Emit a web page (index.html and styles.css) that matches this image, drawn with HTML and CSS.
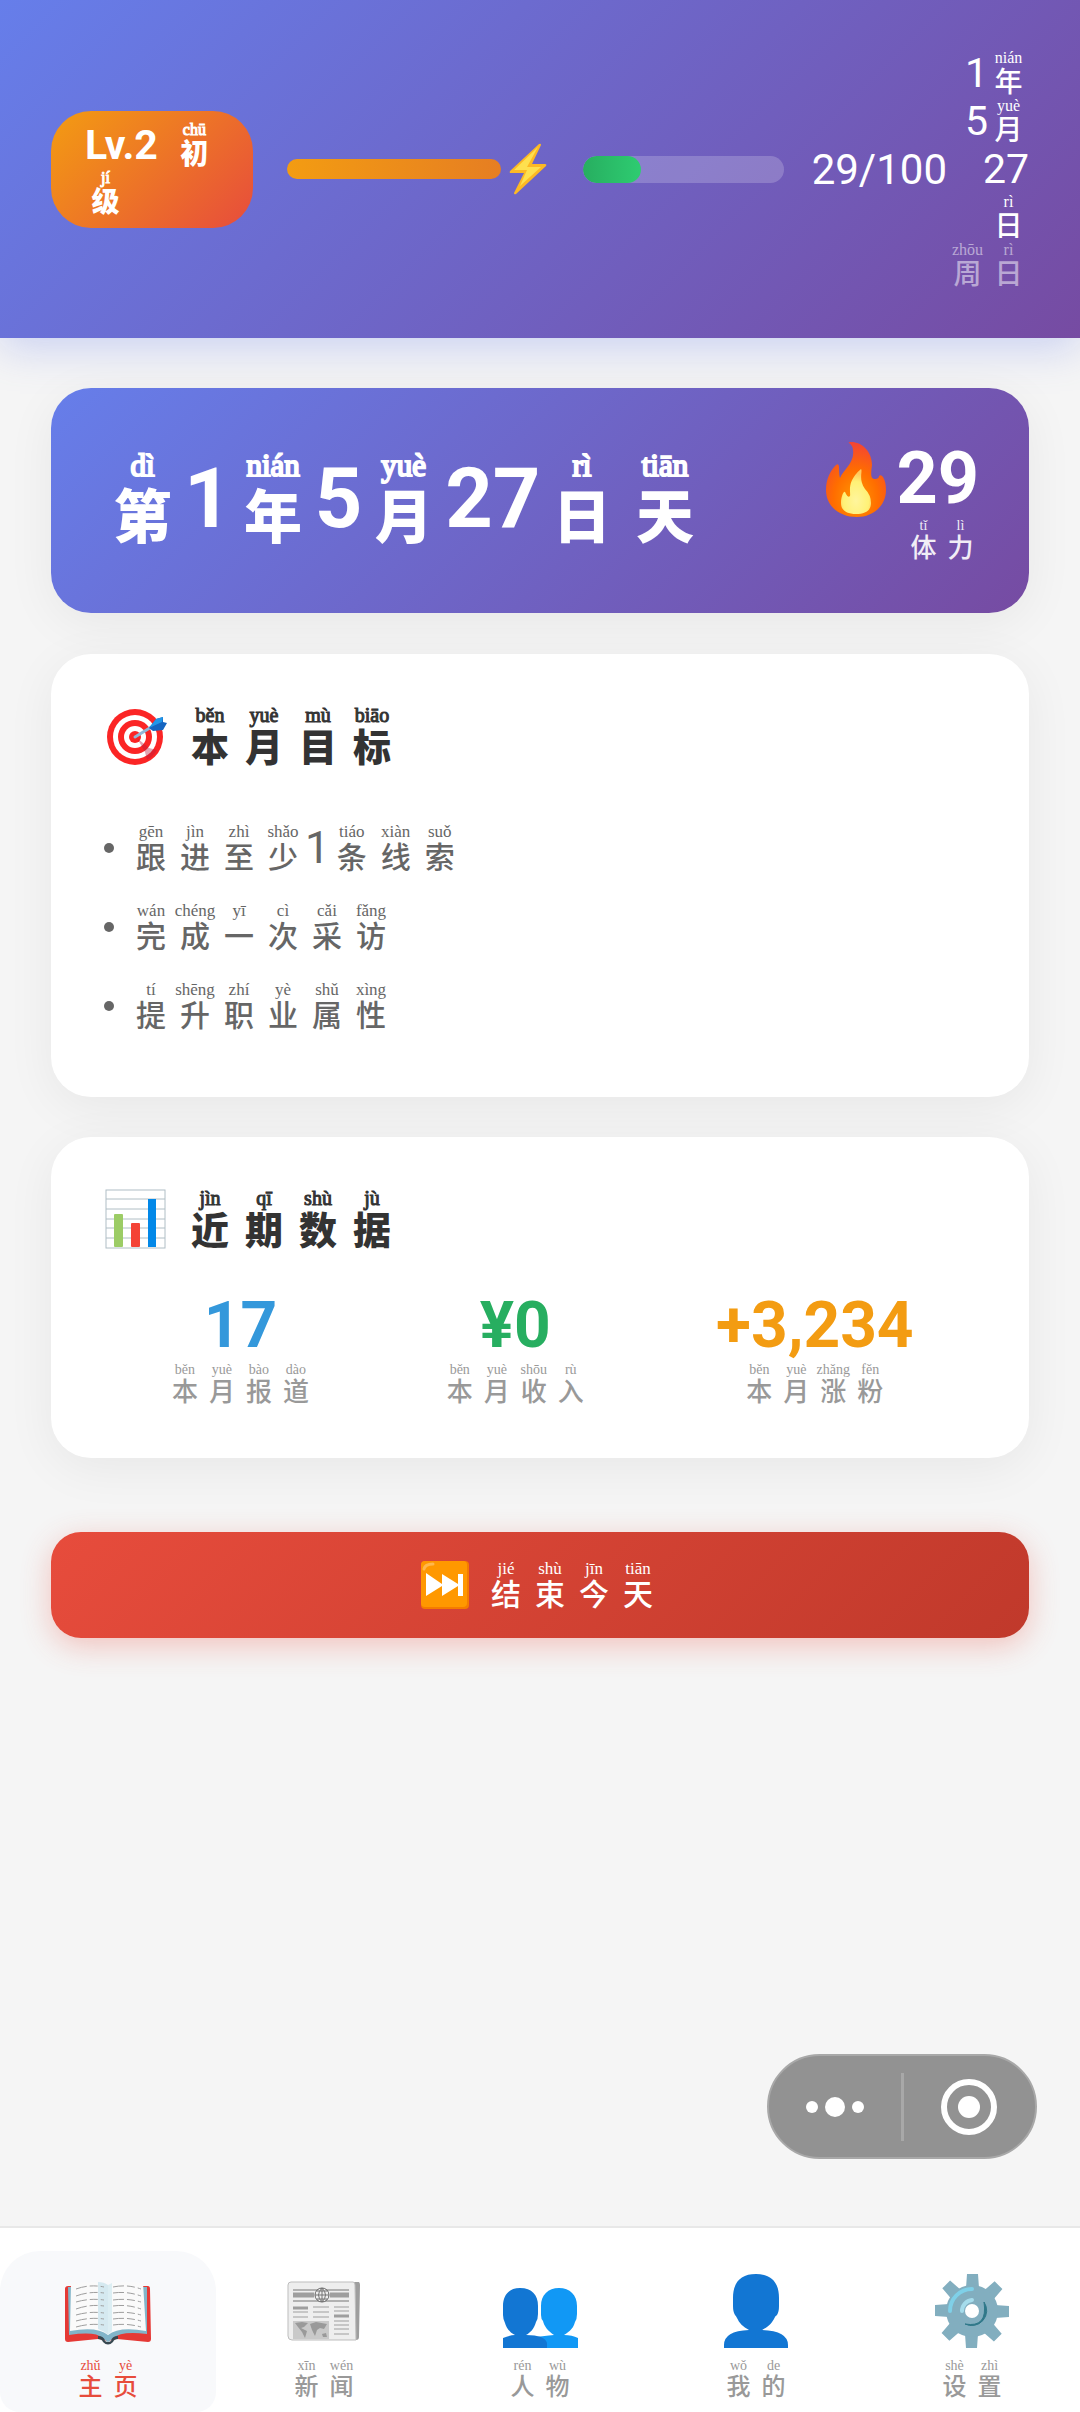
FILE: index.html
```html
<!DOCTYPE html>
<html lang="zh-CN">
<head>
    <meta charset="UTF-8">
    <meta name="viewport" content="width=device-width, initial-scale=1.0">
    <title>主页</title>
    <link rel="stylesheet" href="styles.css">
</head>
<body>

<header class="top-bar">
    <div class="level-badge size-m bold">
        <span class="num">Lv.2</span>
        <ruby>初<rt>chū</rt></ruby>
        <ruby>级<rt>jí</rt></ruby>
    </div>
    <div class="exp-bar"></div>
    <svg class="bolt" viewBox="0 0 38 52" aria-hidden="true">
        <path d="M30 1 L1 28 Q0 30 2 30 L15 30 L5 50 Q5 52 7 51 L37 23 Q38 21 36 21 L23 21 L32 2 Q32 0 30 1Z" fill="#fdb924"/>
        <path d="M29 4 L5 27 L18 27 L11 43 L32 24 L18 24Z" fill="#fee04f"/>
    </svg>
    <div class="energy-track"><div class="energy-fill" style="width: 29%"></div></div>
    <span class="energy-text">29/100</span>
    <div class="date size-m">
        <div class="date-line"><span class="num">1</span><ruby>年<rt>nián</rt></ruby></div>
        <div class="date-line"><span class="num">5</span><ruby>月<rt>yuè</rt></ruby></div>
        <div class="date-line"><span class="num">27</span></div>
        <div class="date-line"><ruby>日<rt>rì</rt></ruby></div>
        <div class="date-line weekday"><ruby>周<rt>zhōu</rt></ruby><ruby>日<rt>rì</rt></ruby></div>
    </div>
</header>

<main class="content">
    <section class="banner">
        <h1 class="line size-xxl bold">
            <ruby>第<rt>dì</rt></ruby><span class="num">1</span><ruby>年<rt>nián</rt></ruby><span class="num">5</span><ruby>月<rt>yuè</rt></ruby><span class="num">27</span><ruby>日<rt>rì</rt></ruby><ruby>天<rt>tiān</rt></ruby>
        </h1>
        <div class="stamina">
            <div class="stamina-value">
                <svg class="fire" viewBox="0 0 60 76" aria-hidden="true">
                    <defs>
                        <radialGradient id="flame" cx="50%" cy="75%" r="75%">
                            <stop offset="0" stop-color="#ff9800"/>
                            <stop offset="0.5" stop-color="#ff6d00"/>
                            <stop offset="1" stop-color="#f44336"/>
                        </radialGradient>
                        <radialGradient id="core" cx="50%" cy="70%" r="60%">
                            <stop offset="0" stop-color="#fff59d"/>
                            <stop offset="0.7" stop-color="#fff176"/>
                            <stop offset="1" stop-color="#ffca5f"/>
                        </radialGradient>
                    </defs>
                    <path d="M24 1 C34 0 46 9 46 24 C45 32 44 38 49 38 Q53 38 53 35 Q55 33 57 36 Q60 41 60 49 C60 65 47 76 31 76 C13 76 0 65 0 49 C0 37 5 29 10 24 Q13 22 13 26 Q13 34 14 37 C17 29 29 22 27 9 Q27 5 23 2 Q22 1 24 1Z" fill="url(#flame)"/>
                    <path d="M35 28 C37 30 32 38 39 48 Q45 54 45 62 C45 70 39 73 30 73 C20 73 15 69 15 62 C15 56 17 52 18 51 Q19 50 20 53 Q22 57 24 55 C25 51 20 41 35 28Z" fill="url(#core)"/>
                </svg>
                <span>29</span>
            </div>
            <div class="line size-s"><ruby>体<rt>tǐ</rt></ruby><ruby>力<rt>lì</rt></ruby></div>
        </div>
    </section>

    <section class="card goals">
        <h2 class="card-title size-xl bold">
            <svg class="title-icon" viewBox="0 0 64 60" aria-hidden="true">
                <circle cx="32" cy="31" r="28" fill="#fb2525"/>
                <circle cx="32" cy="31" r="22" fill="#fff"/>
                <circle cx="32" cy="31" r="17" fill="#fb2525"/>
                <circle cx="32" cy="31" r="11" fill="#fff"/>
                <circle cx="32" cy="31" r="6" fill="#fb2525"/>
                <path d="M34 32 L46 42 L54 44 Q50 51 44 54 L42 46Z" fill="#b71c3c" opacity="0.4"/>
                <path d="M32 31 L50 20" stroke="#90b8d8" stroke-width="3" stroke-linecap="round"/>
                <path d="M46 22 L53 13 L60 11 L60 16 L64 17 L60 24 L50 25Z" fill="#1565c0"/>
                <path d="M46 22 L53 13 L60 11 L59 16Z" fill="#2196e8"/>
            </svg>
            <span class="line"><ruby>本<rt>běn</rt></ruby><ruby>月<rt>yuè</rt></ruby><ruby>目<rt>mù</rt></ruby><ruby>标<rt>biāo</rt></ruby></span>
        </h2>
        <ul class="goal-list size-l">
            <li class="line"><ruby>跟<rt>gēn</rt></ruby><ruby>进<rt>jìn</rt></ruby><ruby>至<rt>zhì</rt></ruby><ruby>少<rt>shǎo</rt></ruby><span class="num">1</span><ruby>条<rt>tiáo</rt></ruby><ruby>线<rt>xiàn</rt></ruby><ruby>索<rt>suǒ</rt></ruby></li>
            <li class="line"><ruby>完<rt>wán</rt></ruby><ruby>成<rt>chéng</rt></ruby><ruby>一<rt>yī</rt></ruby><ruby>次<rt>cì</rt></ruby><ruby>采<rt>cǎi</rt></ruby><ruby>访<rt>fǎng</rt></ruby></li>
            <li class="line"><ruby>提<rt>tí</rt></ruby><ruby>升<rt>shēng</rt></ruby><ruby>职<rt>zhí</rt></ruby><ruby>业<rt>yè</rt></ruby><ruby>属<rt>shǔ</rt></ruby><ruby>性<rt>xìng</rt></ruby></li>
        </ul>
    </section>

    <section class="card recent">
        <h2 class="card-title size-xl bold">
            <svg class="title-icon" viewBox="0 0 64 60" aria-hidden="true">
                <rect x="3" y="1" width="59" height="58" fill="#fff" stroke="#b0bec5" stroke-width="1"/>
                <path d="M3 10H62M3 20H62M3 30H62M3 39H62M3 49H62" stroke="#b0bec5" stroke-width="1"/>
                <rect x="11" y="25" width="9" height="33" rx="1" fill="#9ccc65"/>
                <rect x="28" y="34" width="9" height="24" rx="1" fill="#f44336"/>
                <rect x="45" y="10" width="8" height="48" fill="#0288e8"/>
            </svg>
            <span class="line"><ruby>近<rt>jìn</rt></ruby><ruby>期<rt>qī</rt></ruby><ruby>数<rt>shù</rt></ruby><ruby>据<rt>jù</rt></ruby></span>
        </h2>
        <div class="stats">
            <div class="stat">
                <div class="stat-value blue">17</div>
                <div class="line size-s"><ruby>本<rt>běn</rt></ruby><ruby>月<rt>yuè</rt></ruby><ruby>报<rt>bào</rt></ruby><ruby>道<rt>dào</rt></ruby></div>
            </div>
            <div class="stat">
                <div class="stat-value green">¥0</div>
                <div class="line size-s"><ruby>本<rt>běn</rt></ruby><ruby>月<rt>yuè</rt></ruby><ruby>收<rt>shōu</rt></ruby><ruby>入<rt>rù</rt></ruby></div>
            </div>
            <div class="stat">
                <div class="stat-value orange">+3,234</div>
                <div class="line size-s"><ruby>本<rt>běn</rt></ruby><ruby>月<rt>yuè</rt></ruby><ruby>涨<rt>zhǎng</rt></ruby><ruby>粉<rt>fěn</rt></ruby></div>
            </div>
        </div>
    </section>

    <button type="button" class="end-day size-l">
        <svg class="skip-icon" viewBox="0 0 50 50" aria-hidden="true">
            <rect x="1" y="1" width="48" height="48" rx="4" fill="#f57c00"/>
            <rect x="1" y="1" width="46" height="46" rx="4" fill="#ff9800"/>
            <path d="M4 9 Q5 4 13 4" fill="none" stroke="#ffb74d" stroke-width="3" stroke-linecap="round"/>
            <path d="M6 13 L22 24 V14 L38 24 V14 H43 V36 H38 V26 L22 36 V26 L6 36Z" fill="#fff"/>
        </svg>
        <span class="line"><ruby>结<rt>jié</rt></ruby><ruby>束<rt>shù</rt></ruby><ruby>今<rt>jīn</rt></ruby><ruby>天<rt>tiān</rt></ruby></span>
    </button>
</main>

<div class="capsule">
    <button type="button" class="capsule-btn" aria-label="更多">
        <svg viewBox="0 0 64 64" aria-hidden="true">
            <circle cx="9" cy="32" r="6" fill="#fff"/>
            <circle cx="32" cy="32" r="10" fill="#fff"/>
            <circle cx="55" cy="32" r="6" fill="#fff"/>
        </svg>
    </button>
    <span class="capsule-line"></span>
    <button type="button" class="capsule-btn" aria-label="关闭">
        <svg viewBox="0 0 64 64" aria-hidden="true">
            <circle cx="32" cy="32" r="25" fill="none" stroke="#fff" stroke-width="6"/>
            <circle cx="32" cy="32" r="11" fill="#fff"/>
        </svg>
    </button>
</div>

<nav class="tab-bar">
    <a href="#" class="tab active">
        <svg class="tab-icon" viewBox="0 0 88 74" aria-hidden="true">
            <path d="M1 15 Q1 12 4 12 H84 Q86 12 86 15 L87 65 Q87 68 84 68 L53 65 L44 67 L34 65 L4 68 Q1 68 1 65Z" fill="#e53935"/>
            <path d="M4 13 H83 V60 Q56 57 50 64 L44 68 L38 64 Q32 57 5 61Z" fill="#82b5c9"/>
            <path d="M7 10 Q30 6 44 11 Q58 6 79 9 L82 57 Q55 52 44 61 Q33 52 6 57Z" fill="#fafafa"/>
            <path d="M34 8 Q40 8 44 11 V61 Q40 57 34 55Z" fill="#d5e9f0"/>
            <path d="M44 11 L48 9 V57 L44 61Z" fill="#dceef3"/>
            <path d="M34 62 Q40 62 41 67 Q44 69 47 67 Q48 62 54 62 L54 65 Q50 65 49 68 Q44 73 39 68 Q38 65 34 65Z" fill="#37474f"/>
            <g fill="none" stroke="#9e9e9e" stroke-width="1" stroke-dasharray="11 3 8 3">
                <path d="M12 15Q26 10 40 13M12 22Q26 17 40 19M12 28Q26 24 40 26M12 35Q26 30 40 32M12 41Q26 37 40 39M12 47Q26 43 40 45M12 53Q26 49 40 51"/>
                <path d="M49 13Q63 10 77 15M49 19Q63 17 77 22M49 26Q63 24 77 28M49 32Q63 30 77 35M49 39Q63 37 77 41M49 45Q63 43 77 47M49 51Q63 49 77 53"/>
            </g>
        </svg>
        <span class="line size-xs"><ruby>主<rt>zhǔ</rt></ruby><ruby>页<rt>yè</rt></ruby></span>
    </a>
    <a href="#" class="tab">
        <svg class="tab-icon" viewBox="0 0 88 74" aria-hidden="true">
            <path d="M74 8 H79 Q80 9 80 11 L79 63 Q79 66 76 66 H70Z" fill="#9e9e9e"/>
            <path d="M11 8 H73 Q75 8 75 11 L76 66 H12 Q8 66 8 62 V11 Q8 8 11 8Z" fill="#eeeeee" stroke="#bdbdbd" stroke-width="1"/>
            <path d="M13 16H69M13 27H69" stroke="#757575" stroke-width="1"/>
            <path d="M13 21H34M50 21H69" stroke="#9e9e9e" stroke-width="5"/>
            <circle cx="42" cy="21" r="7" fill="#eee" stroke="#616161" stroke-width="1"/>
            <path d="M35 21H49M42 14V28M37 17H47M37 25H47M42 14Q35 21 42 28Q49 21 42 14" fill="none" stroke="#757575" stroke-width="1"/>
            <path d="M13 34H28M54 42H69" stroke="#9e9e9e" stroke-width="3"/>
            <path d="M33 33H49M33 38H49M33 43H49M13 38H28M13 43H28M54 33H69M54 37H69M54 47H69M54 51H69M54 55H69M54 60H69" stroke="#9e9e9e" stroke-width="1"/>
            <rect x="13" y="47" width="36" height="18" fill="#c9c9c9"/>
            <path d="M15 49L22 48L28 49L24 53L21 54L27 57L25 64L22 58L18 53Z M30 50L36 48L47 50L44 55L40 54L37 56L35 62L32 56Z M42 60L46 59L47 63L43 63Z" fill="#9a9a9a"/>
        </svg>
        <span class="line size-xs"><ruby>新<rt>xīn</rt></ruby><ruby>闻<rt>wén</rt></ruby></span>
    </a>
    <a href="#" class="tab">
        <svg class="tab-icon" viewBox="0 0 88 74" aria-hidden="true">
            <path d="M63 14 C74 14 81 21 81 32 V40 Q81 45 79 48 C77 56 71 59 68 61 Q76 61 82 64 V74 H30 V64 Q49 62 58 61 C52 57 48 52 47 47 Q45 45 45 41 V32 C45 21 52 14 63 14Z" fill="#1198f5"/>
            <path d="M24 14 C36 14 42 21 42 32 V40 Q42 45 40 48 C38 55 34 59 30 61 Q49 61 51 69 V74 H7 V64 Q14 61 19 61 C13 58 10 53 9 49 Q7 45 7 41 V32 C7 21 13 14 24 14Z" fill="#1276d3"/>
        </svg>
        <span class="line size-xs"><ruby>人<rt>rén</rt></ruby><ruby>物<rt>wù</rt></ruby></span>
    </a>
    <a href="#" class="tab">
        <svg class="tab-icon" viewBox="0 0 88 74" aria-hidden="true">
            <path d="M44 0 C59 0 67 8 67 24 V32 Q67 38 65 41 Q63 42 62 45 C59 50 56 53 50 56 Q76 57 76 71 V74 H12 V71 Q12 57 37 56 C31 53 27 49 25 44 Q24 42 23 41 Q21 38 21 32 V24 C21 8 29 0 44 0Z" fill="#1276d3"/>
        </svg>
        <span class="line size-xs"><ruby>我<rt>wǒ</rt></ruby><ruby>的<rt>de</rt></ruby></span>
    </a>
    <a href="#" class="tab">
        <svg class="tab-icon" viewBox="0 0 88 74" aria-hidden="true">
            <g fill="#82aebf">
                <path id="tooth" d="M38 14 L39 0 H50 L51 14 L53 24 H36Z"/>
                <use href="#tooth" transform="rotate(45 44 37)"/>
                <use href="#tooth" transform="rotate(90 44 37)"/>
                <use href="#tooth" transform="rotate(135 44 37)"/>
                <use href="#tooth" transform="rotate(180 44 37)"/>
                <use href="#tooth" transform="rotate(225 44 37)"/>
                <use href="#tooth" transform="rotate(270 44 37)"/>
                <use href="#tooth" transform="rotate(315 44 37)"/>
                <circle cx="44" cy="37" r="26"/>
            </g>
            <path d="M22 37 A22 22 0 0 1 44 15" fill="none" stroke="#7fd0e8" stroke-width="4" stroke-linecap="round"/>
            <path d="M34 37 A11 11 0 0 1 44 26" fill="none" stroke="#a5dcec" stroke-width="4" stroke-linecap="round"/>
            <path d="M56 28 A15 15 0 0 1 37 50 Q60 54 56 28Z" fill="#2f7889" stroke="#2f7889" stroke-width="1"/>
            <circle cx="44" cy="37" r="7" fill="#fff"/>
        </svg>
        <span class="line size-xs"><ruby>设<rt>shè</rt></ruby><ruby>置<rt>zhì</rt></ruby></span>
    </a>
</nav>

</body>
</html>
```

FILE: styles.css
```css
* {
    box-sizing: border-box;
}
body {
    margin: 0;
    min-height: 100vh;
    display: flex;
    flex-direction: column;
    font-family: Roboto, "Noto Sans CJK SC", sans-serif;
    background-color: #f5f5f5;
    color: #333;
}
h1, h2, ul {
    margin: 0;
    padding: 0;
}

/* text sizes: cell width and digits, character, pinyin, gap between the two */
.size-xs { --cell: 35px; --hz: 24px; --py: 14px; --gap: 2px; }
.size-s { --cell: 37px; --hz: 26px; --py: 14px; --gap: 2px; }
.size-m { --cell: 41px; --hz: 28px; --py: 16px; --gap: 3px; }
.size-l { --cell: 44px; --hz: 30px; --py: 17px; --gap: 3px; }
.size-xl { --cell: 54px; --hz: 38px; --py: 20px; --gap: 4px; }
.size-xxl { --cell: 83px; --hz: 58px; --py: 31px; --gap: 8px; }

.line {
    display: flex;
    align-items: center;
}
.num {
    font-size: var(--cell);
    line-height: 1;
}
ruby {
    display: flex;
    flex-direction: column-reverse;
    align-items: center;
    gap: var(--gap);
    width: var(--cell);
    font-family: Roboto, "Noto Sans CJK SC", sans-serif;
    font-size: var(--hz);
    line-height: var(--hz);
    font-weight: 500;
    white-space: nowrap;
}
rt {
    display: block;
    font-family: "Liberation Serif", serif;
    font-size: var(--py);
    line-height: var(--py);
    font-weight: normal;
}
.bold, .bold ruby {
    font-weight: 900;
}
.bold .num {
    font-weight: bold;
}
.bold rt {
    -webkit-text-stroke: 1px currentColor;
}

.top-bar {
    display: flex;
    align-items: center;
    padding: 49px 51px;
    color: white;
    background: linear-gradient(135deg, #667eea 0%, #764ba2 100%);
    box-shadow: 0 10px 40px rgba(102, 126, 234, 0.3);
}
.level-badge {
    display: flex;
    flex-wrap: wrap;
    align-items: center;
    gap: 1px 16px;
    width: 202px;
    margin-right: 34px;
    padding: 11px 34px;
    border-radius: 40px;
    background: linear-gradient(135deg, #f39c12, #e74c3c);
}
.exp-bar {
    flex: 17;
    height: 20px;
    border-radius: 10px;
    background: linear-gradient(90deg, #f39c12, #e67e22);
}
.bolt {
    width: 38px;
    height: 52px;
    margin: 0 36px 0 8px;
}
.energy-track {
    flex: 16;
    height: 27px;
    border-radius: 14px;
    background-color: rgba(255, 255, 255, 0.2);
    overflow: hidden;
}
.energy-fill {
    height: 100%;
    border-radius: 14px;
    background: linear-gradient(90deg, #27ae60, #2ecc71);
}
.energy-text {
    margin-left: 28px;
    font-size: 42px;
}
.date-line {
    display: flex;
    justify-content: flex-end;
    align-items: center;
    height: 48px;
}
.weekday {
    color: rgba(255, 255, 255, 0.5);
}

.content {
    padding: 50px 51px;
}
.banner {
    display: flex;
    justify-content: space-between;
    align-items: center;
    height: 225px;
    margin-bottom: 41px;
    padding: 0 50px;
    border-radius: 40px;
    color: white;
    background: linear-gradient(135deg, #667eea 0%, #764ba2 100%);
    box-shadow: 0 10px 50px rgba(0, 0, 0, 0.06);
}
.banner h1 {
    padding-bottom: 4px;
}
.banner h1 rt {
    -webkit-text-stroke: 2px currentColor;
}
.stamina {
    display: flex;
    flex-direction: column;
    align-items: flex-end;
    gap: 2px;
}
.stamina-value {
    display: flex;
    align-items: center;
    gap: 10px;
    font-size: 72px;
    line-height: 72px;
    font-weight: bold;
}
.fire {
    width: 60px;
    height: 76px;
}
.stamina .line {
    opacity: 0.9;
}

.card {
    margin-bottom: 40px;
    padding: 52px;
    border-radius: 40px;
    background: white;
    box-shadow: 0 10px 50px rgba(0, 0, 0, 0.06);
}
.card-title {
    display: flex;
    align-items: center;
    gap: 16px;
    height: 60px;
}
.title-icon {
    width: 64px;
    height: 60px;
}
.goal-list {
    display: flex;
    flex-direction: column;
    gap: 29px;
    margin: 57px 0 14px;
    list-style: none;
    color: #666;
}
.goal-list li::before {
    content: "";
    width: 10px;
    height: 10px;
    margin: 0 15px 0 1px;
    border-radius: 50%;
    background-color: #666;
}
.stats {
    display: flex;
    justify-content: space-around;
    margin-top: 40px;
    padding-bottom: 1px;
}
.stat {
    display: flex;
    flex-direction: column;
    align-items: center;
    color: #999;
}
.stat-value {
    font-size: 64px;
    line-height: 74px;
    font-weight: bold;
}
.blue { color: #3498db; }
.green { color: #27ae60; }
.orange { color: #f39c12; }

.end-day {
    display: flex;
    justify-content: center;
    align-items: center;
    gap: 14px;
    width: 100%;
    height: 106px;
    margin-top: 74px;
    border: none;
    border-radius: 30px;
    color: white;
    background: linear-gradient(135deg, #e74c3c, #c0392b);
    box-shadow: 0 8px 30px rgba(231, 76, 60, 0.3);
    cursor: pointer;
}
.skip-icon {
    width: 50px;
    height: 50px;
}

/* floating capsule over the page */
.capsule {
    position: fixed;
    right: 43px;
    bottom: 253px;
    display: flex;
    align-items: center;
    width: 270px;
    height: 105px;
    border: 2px solid #a8a8a8;
    border-radius: 53px;
    background-color: #929292;
}
.capsule-btn {
    flex: 1;
    display: flex;
    justify-content: center;
    padding: 0;
    border: none;
    background: none;
    cursor: pointer;
}
.capsule-btn svg {
    width: 64px;
    height: 64px;
}
.capsule-line {
    width: 3px;
    height: 68px;
    background-color: #a8a8a8;
}

.tab-bar {
    display: flex;
    margin-top: auto;
    padding-top: 23px;
    border-top: 2px solid #e8e8e8;
    background: white;
}
.tab {
    flex: 1;
    display: flex;
    flex-direction: column;
    align-items: center;
    gap: 11px;
    height: 161px;
    padding-top: 23px;
    border-radius: 40px 40px 20px 20px;
    color: #999;
    text-decoration: none;
}
.tab.active {
    color: #e74c3c;
    background-color: #f8f9fb;
}
.tab-icon {
    width: 88px;
    height: 74px;
}
```
